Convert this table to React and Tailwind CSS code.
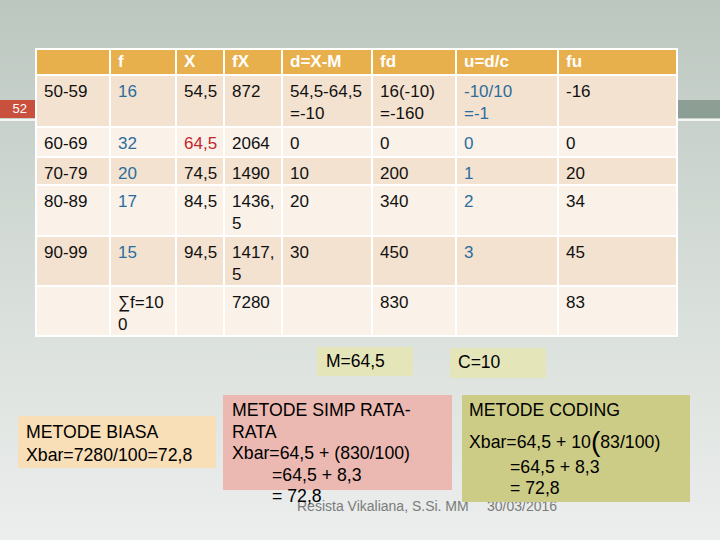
const blue = "text-[#2b6d9e]";
const red = "text-[#c1272d]";

const header = ["", "f", "X", "fX", "d=X-M", "fd", "u=d/c", "fu"];

const rows = [
  {
    bg: "bg-[#f4e2d0]",
    cells: ["50-59", { t: "16", c: blue }, "54,5", "872", ["54,5-64,5", "=-10"], ["16(-10)", "=-160"], { t: ["-10/10", "=-1"], c: blue }, "-16"],
  },
  {
    bg: "bg-[#faf1e8]",
    cells: ["60-69", { t: "32", c: blue }, { t: "64,5", c: red }, "2064", "0", "0", { t: "0", c: blue }, "0"],
  },
  {
    bg: "bg-[#f4e2d0]",
    cells: ["70-79", { t: "20", c: blue }, "74,5", "1490", "10", "200", { t: "1", c: blue }, "20"],
  },
  {
    bg: "bg-[#faf1e8]",
    cells: ["80-89", { t: "17", c: blue }, "84,5", ["1436,", "5"], "20", "340", { t: "2", c: blue }, "34"],
  },
  {
    bg: "bg-[#f4e2d0]",
    cells: ["90-99", { t: "15", c: blue }, "94,5", ["1417,", "5"], "30", "450", { t: "3", c: blue }, "45"],
  },
  {
    bg: "bg-[#faf1e8]",
    cells: ["", ["∑f=10", "0"], "", "7280", "", "830", "", "83"],
  },
];

function Cell({ value, bg }) {
  let text = value;
  let color = "text-[#111]";
  if (value && typeof value === "object" && !Array.isArray(value)) {
    text = value.t;
    color = value.c;
  }
  const lines = Array.isArray(text) ? text : [text];
  return (
    <div className={`${bg} ${color} pl-[7px] pt-[5px] leading-[21.6px]`}>
      {lines.map((l, i) => (
        <div key={i}>{l}</div>
      ))}
    </div>
  );
}

function FreqTable() {
  return (
    <div className="relative z-10 ml-[35px] mt-[48px] grid w-[643px] grid-cols-[72px_64px_46px_56px_88px_82px_100px_117px] grid-rows-[24px_50px_28px_26px_49px_48px_48px] gap-[2px] bg-white p-[2px] text-[17px]">
      {header.map((h, i) => (
        <div key={i} className="bg-[#e8b04c] pl-[7px] font-bold leading-[24px] text-white">
          {h}
        </div>
      ))}
      {rows.map((r, ri) => r.cells.map((c, ci) => <Cell key={`${ri}-${ci}`} value={c} bg={r.bg} />))}
    </div>
  );
}

export default function App() {
  return (
    <div className="relative h-[540px] w-[720px] overflow-hidden bg-gradient-to-b from-[#bcc7c0] via-[#d6ddd8] to-[#eceeed] font-['Liberation_Sans',Arial,sans-serif] text-black">
      {/* title band behind the table */}
      <div className="absolute left-0 top-[100px] w-full">
        <div className="flex h-[18px] bg-[#8d9f94]">
          <div className="w-[35px] bg-[#c9503d] pr-[8px] text-right text-[13px] leading-[18px] text-white">52</div>
        </div>
        <div className="mt-px h-[2px] bg-[#f4f5f4]" />
      </div>

      <FreqTable />

      <div className="flex items-start">
        <div className="ml-[317px] mt-[10px] h-[29px] w-[96px] bg-[#e4e5b9] pl-[9px] pt-[4px] text-[17.5px] leading-[21.6px]">M=64,5</div>
        <div className="ml-[37px] mt-[11px] h-[30px] w-[96px] bg-[#e4e5b9] pl-[8px] pt-[4px] text-[17.5px] leading-[21.6px]">C=10</div>
      </div>

      {/* footer */}
      <div className="absolute left-[297px] top-[498px] text-[14px] leading-[16px] text-[#7b7b7b]">Resista Vikaliana, S.Si. MM</div>
      <div className="absolute left-[487px] top-[498px] text-[14px] leading-[16px] text-[#7b7b7b]">30/03/2016</div>

      <div className="relative z-10 flex items-start text-[17.7px]">
        <div className="ml-[18px] mt-[38px] h-[52px] w-[198px] bg-[#f8dfb7] pl-[8px] pt-[5px] leading-[23px]">
          <div>METODE BIASA</div>
          <div>Xbar=7280/100=72,8</div>
        </div>
        <div className="ml-[7px] mt-[17px] h-[95px] w-[229px] bg-[#ebb9b1] pl-[9px] pt-[5px] leading-[21.6px]">
          <div>METODE SIMP RATA-</div>
          <div>RATA</div>
          <div>Xbar=64,5 + (830/100)</div>
          <div className="pl-[40px]">=64,5 + 8,3</div>
          <div className="pl-[40px]">= 72,8</div>
        </div>
        <div className="ml-[10px] mt-[17px] h-[107px] w-[228px] bg-[#cccc86] pl-[7px] pt-[5px] leading-[21px]">
          <div className="h-[21px]">METODE CODING</div>
          <div className="mt-[11px] h-[21px] whitespace-nowrap">
            Xbar=64,5 + 10<span className="align-[-3px] text-[28px] font-light leading-[0]">(</span>83/100)
          </div>
          <div className="mt-[4px] h-[21px] pl-[41px]">=64,5 + 8,3</div>
          <div className="h-[21px] pl-[41px]">= 72,8</div>
        </div>
      </div>
    </div>
  );
}
